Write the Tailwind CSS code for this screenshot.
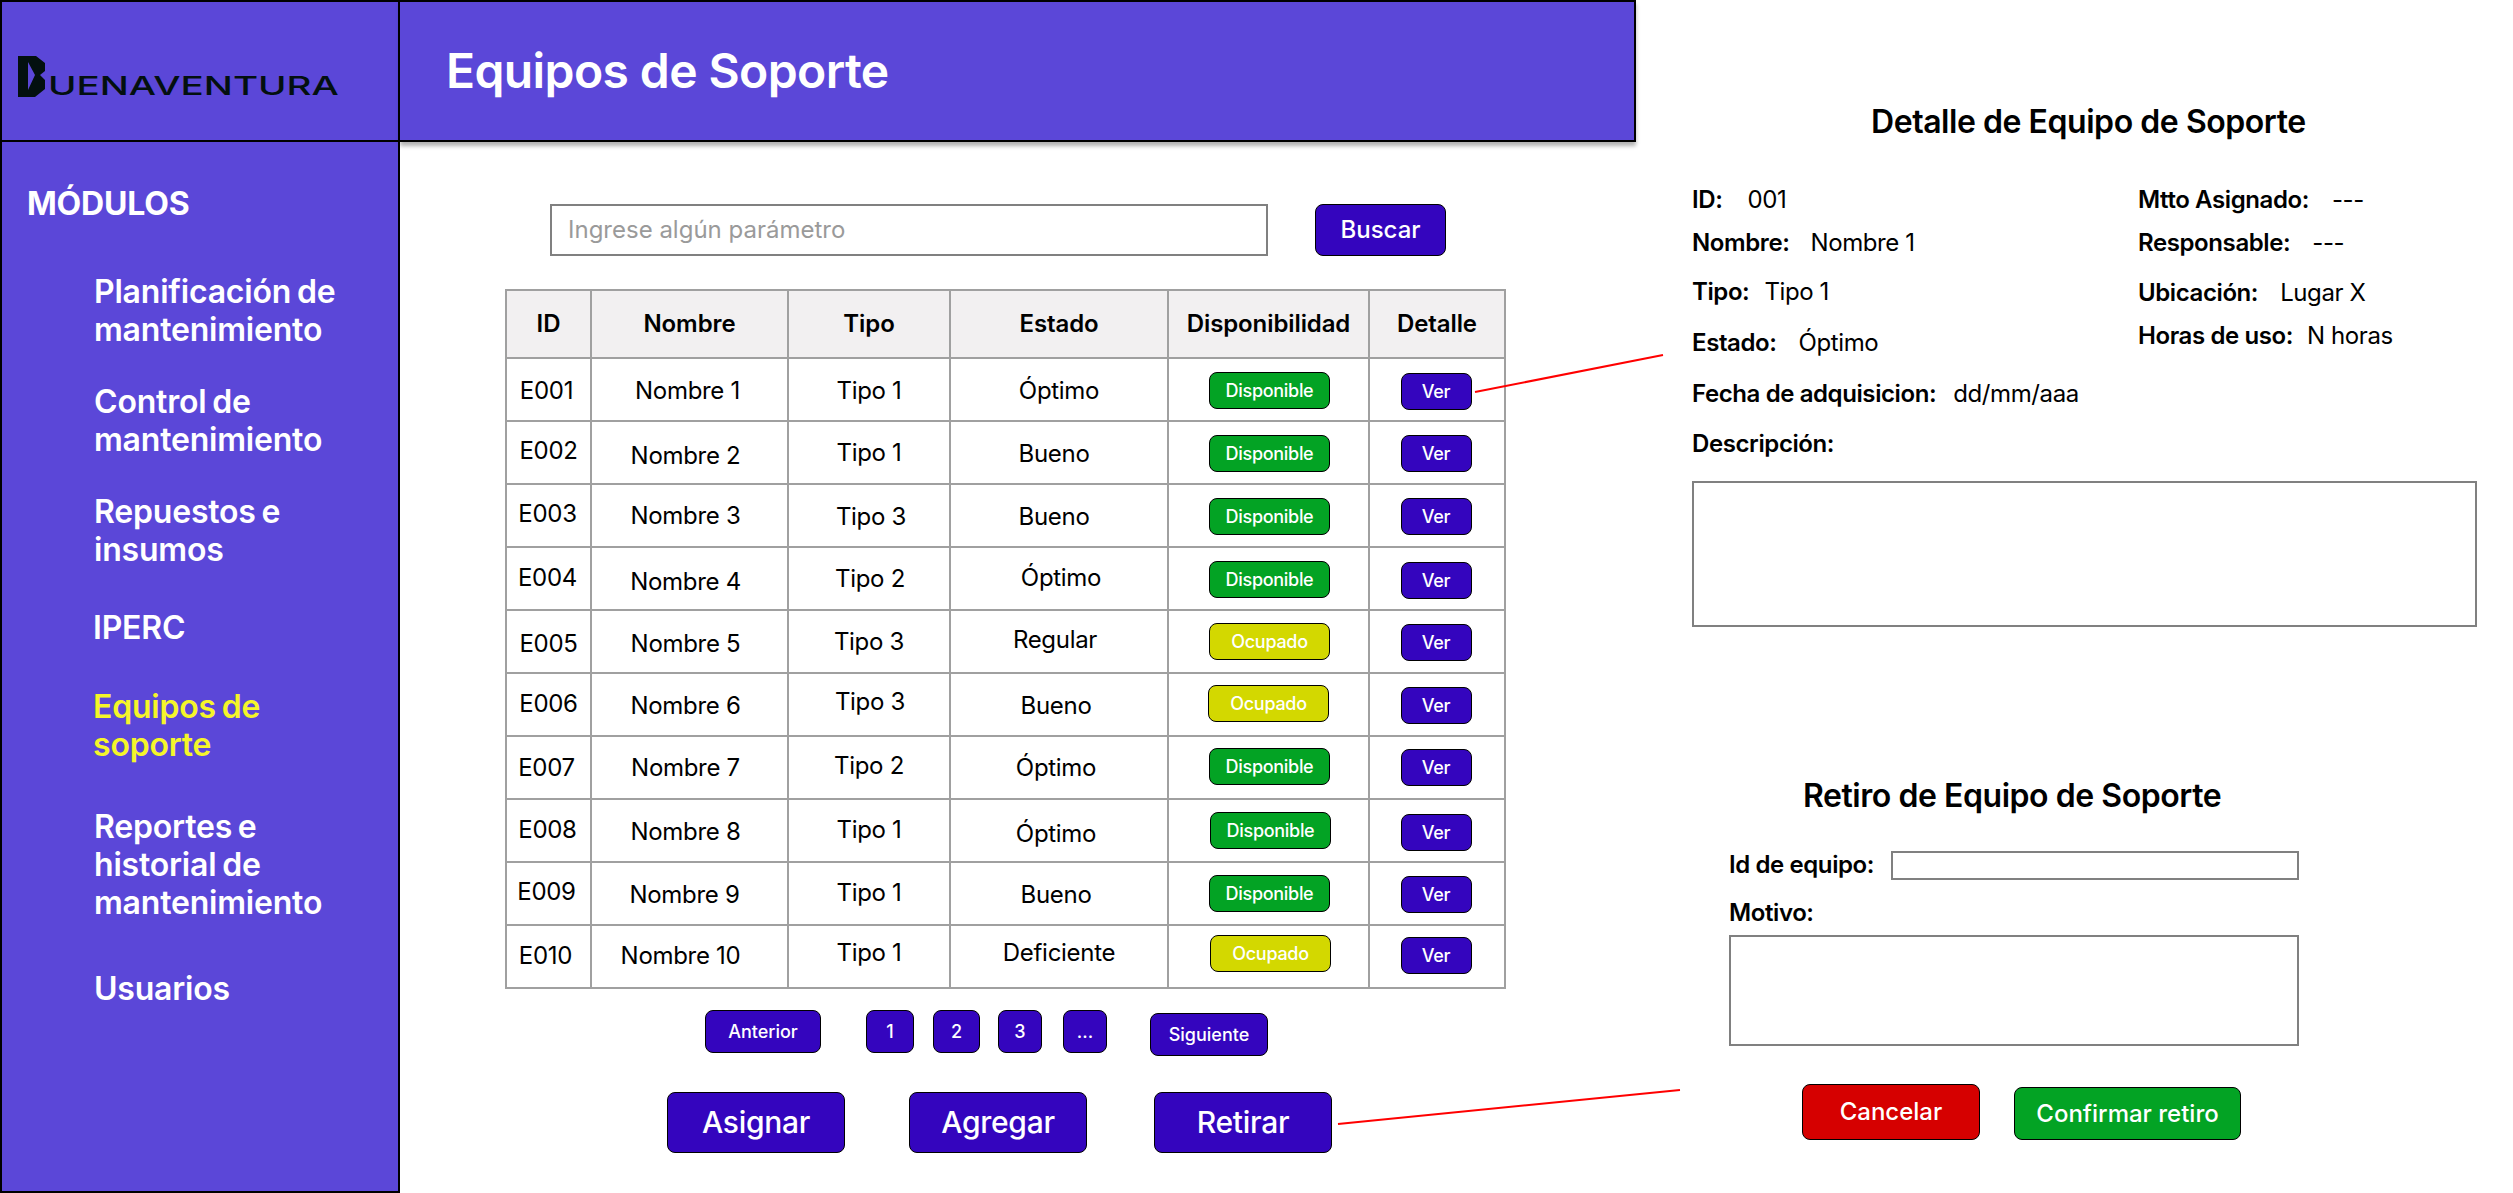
<!DOCTYPE html>
<html lang="es">
<head>
    <meta charset="UTF-8">
    <title>Equipos de Soporte</title>
    <script src="https://cdn.jsdelivr.net/npm/@tailwindcss/browser@4"></script>
</head>
<body class="relative w-[2513px] h-[1193px] overflow-hidden bg-white text-black font-['Inter',sans-serif]">
    <div class="grid grid-cols-[400px_1236px_1fr] h-full">
        <!-- sidebar -->
        <aside class="flex flex-col h-full bg-[#5b47d8] border-2 border-black">
            <div class="flex items-start h-[140px] border-b-2 border-black pl-[16px] pt-[54px] shrink-0">
                <svg class="w-[27px] h-[41px] shrink-0" viewBox="0 0 27 41"><path d="M0 0H18L27 7V15L22 19L27 24V33L17 41H0Z M10 6V34L17 19Z" fill="#03100f" fill-rule="evenodd"/></svg>
                <span class="block origin-left scale-x-[1.48] ml-[3px] mt-[17px] text-[26px] leading-[26px] font-medium text-[#03100f] whitespace-nowrap">UENAVENTURA</span>
            </div>
            <nav class="text-white text-[32px] leading-[38px] font-semibold tracking-[-0.2px] [word-spacing:-2px]">
                <h2 class="ml-[25px] mt-[43px] font-bold">MÓDULOS</h2>
                <a class="block ml-[92px] mt-[50px]">Planificación de<br>mantenimiento</a>
                <a class="block ml-[92px] mt-[34px]">Control de<br>mantenimiento</a>
                <a class="block ml-[92px] mt-[34px]">Repuestos e<br>insumos</a>
                <a class="block ml-[91px] mt-[40px]">IPERC</a>
                <a class="block ml-[91px] mt-[41px] text-[#f5f52a]">Equipos de<br>soporte</a>
                <a class="block ml-[92px] mt-[44px]">Reportes e<br>historial de<br>mantenimiento</a>
                <a class="block ml-[92px] mt-[48px]">Usuarios</a>
            </nav>
        </aside>

        <!-- main -->
        <main class="flex flex-col h-full">
            <header class="flex items-center h-[142px] shrink-0 bg-[#5b47d8] border-t-2 border-r-2 border-b-2 border-black pl-[46px] shadow-[0_4px_4px_rgba(0,0,0,0.3)]">
                <h1 class="text-white text-[48px] font-semibold leading-none tracking-[-0.6px]">Equipos de Soporte</h1>
            </header>
            <div class="flex items-start ml-[150px] mt-[62px]">
                <div class="flex items-center w-[718px] h-[52px] border-2 border-[#808080] pl-[16px] text-[24px] text-[#9a9a9a]">Ingrese algún parámetro</div>
                <button class="w-[131px] h-[52px] ml-[47px] rounded-lg border border-black bg-[#3405be] text-white text-[24px] font-medium">Buscar</button>
            </div>
            <table class="ml-[105px] mt-[33px] w-[1001px] table-fixed border-collapse text-[24px] tracking-[-0.3px]">
                <thead>
                    <tr class="h-[68px] bg-[#f2f0f1] font-semibold tracking-[-0.1px]">
                        <th class="w-[85px] border-2 border-[#a0a0a0] font-semibold">ID</th>
                        <th class="w-[197px] border-2 border-[#a0a0a0] font-semibold">Nombre</th>
                        <th class="w-[162px] border-2 border-[#a0a0a0] font-semibold">Tipo</th>
                        <th class="w-[218px] border-2 border-[#a0a0a0] font-semibold">Estado</th>
                        <th class="w-[201px] border-2 border-[#a0a0a0] font-semibold">Disponibilidad</th>
                        <th class="border-2 border-[#a0a0a0] font-semibold">Detalle</th>
                    </tr>
                </thead>
                <tbody id="filas"></tbody>
            </table>
            <div class="flex items-start ml-[305px] mt-[21px] text-white text-[18px] font-medium">
                <button class="w-[116px] h-[43px] rounded-lg border border-black bg-[#3405be]">Anterior</button>
                <button class="w-[48px] h-[43px] ml-[45px] rounded-lg border border-black bg-[#3405be]">1</button>
                <button class="w-[47px] h-[43px] ml-[19px] rounded-lg border border-black bg-[#3405be]">2</button>
                <button class="w-[44px] h-[43px] ml-[18px] rounded-lg border border-black bg-[#3405be]">3</button>
                <button class="w-[44px] h-[43px] ml-[21px] rounded-lg border border-black bg-[#3405be]">...</button>
                <button class="w-[118px] h-[43px] ml-[43px] mt-[3px] rounded-lg border border-black bg-[#3405be]">Siguiente</button>
            </div>
            <div class="flex ml-[267px] mt-[36px] text-white text-[30px] font-medium tracking-[-0.3px]">
                <button class="w-[178px] h-[61px] rounded-lg border border-black bg-[#3405be]">Asignar</button>
                <button class="w-[178px] h-[61px] ml-[64px] rounded-lg border border-black bg-[#3405be]">Agregar</button>
                <button class="w-[178px] h-[61px] ml-[67px] rounded-lg border border-black bg-[#3405be]">Retirar</button>
            </div>
        </main>

        <!-- panels -->
        <section class="flex flex-col pl-[56px] text-[24px] leading-[30px] tracking-[-0.4px]">
            <h2 class="mt-[103px] ml-[179px] text-[32px] leading-[38px] font-semibold tracking-[-0.45px] whitespace-nowrap">Detalle de Equipo de Soporte</h2>
            <div class="flex mt-[44px]">
                <div class="w-[446px]">
                    <p class="h-[30px]"><b class="font-semibold">ID:</b><span class="ml-[25px]">001</span></p>
                    <p class="mt-[13px]"><b class="font-semibold">Nombre:</b><span class="ml-[21px]">Nombre 1</span></p>
                    <p class="mt-[19px]"><b class="font-semibold">Tipo:</b><span class="ml-[15px]">Tipo 1</span></p>
                    <p class="mt-[21px]"><b class="font-semibold">Estado:</b><span class="ml-[22px]">Óptimo</span></p>
                    <p class="mt-[21px]"><b class="font-semibold">Fecha de adquisicion:</b><span class="ml-[17px]">dd/mm/aaa</span></p>
                    <p class="mt-[20px] font-semibold">Descripción:</p>
                </div>
                <div>
                    <p><b class="font-semibold">Mtto Asignado:</b><span class="ml-[23px]">---</span></p>
                    <p class="mt-[13px]"><b class="font-semibold">Responsable:</b><span class="ml-[22px]">---</span></p>
                    <p class="mt-[20px]"><b class="font-semibold">Ubicación:</b><span class="ml-[22px]">Lugar X</span></p>
                    <p class="mt-[13px]"><b class="font-semibold">Horas de uso:</b><span class="ml-[14px]">N horas</span></p>
                </div>
            </div>
            <div class="w-[785px] h-[146px] mt-[22px] border-2 border-[#808080]"></div>

            <h2 class="mt-[150px] ml-[111px] text-[32px] leading-[38px] font-semibold tracking-[-0.45px] whitespace-nowrap">Retiro de Equipo de Soporte</h2>
            <div class="flex items-center ml-[37px] mt-[35px]">
                <span class="w-[162px] font-semibold">Id de equipo:</span>
                <div class="w-[408px] h-[29px] border-2 border-[#808080]"></div>
            </div>
            <p class="ml-[37px] mt-[18px] font-semibold">Motivo:</p>
            <div class="ml-[37px] w-[570px] h-[111px] mt-[7px] border-2 border-[#808080]"></div>
            <div class="flex items-start ml-[110px] mt-[38px] text-white text-[24px] font-medium tracking-normal">
                <button class="w-[178px] h-[56px] rounded-lg border border-black bg-[#d60000]">Cancelar</button>
                <button class="w-[227px] h-[53px] ml-[34px] mt-[3px] rounded-lg border border-black bg-[#03a324]">Confirmar retiro</button>
            </div>
        </section>
    </div>

    <!-- red connector lines -->
    <svg class="absolute left-0 top-0 pointer-events-none" width="2513" height="1193">
        <line x1="1475" y1="392" x2="1663" y2="355" stroke="#ff0000" stroke-width="2"/>
        <line x1="1338" y1="1124" x2="1680" y2="1090" stroke="#ff0000" stroke-width="2"/>
    </svg>

    <script>
        // [id, nombre, tipo, estado, disponibilidad, offsets y de cada celda, offsets x de id/nombre/tipo/estado/pill]
        const filas = [
            ['E001', 'Nombre 1', 'Tipo 1', 'Óptimo', 'Disponible', [1, 1, 1, 1, 1, 2], [-2, -2, 0, 0, 1]],
            ['E002', 'Nombre 2', 'Tipo 1', 'Bueno', 'Disponible', [-2, 3, 0, 1, 1, 1], [0, -4, 0, -5, 1]],
            ['E003', 'Nombre 3', 'Tipo 3', 'Bueno', 'Disponible', [-2, 0, 1, 1, 1, 1], [-1, -4, 2, -5, 1]],
            ['E004', 'Nombre 4', 'Tipo 2', 'Óptimo', 'Disponible', [-1, 3, 0, -1, 1, 2], [-1, -4, 1, 2, 1]],
            ['E005', 'Nombre 5', 'Tipo 3', 'Regular', 'Ocupado', [2, 2, 0, -2, 0, 1], [0, -4, 0, -4, 1]],
            ['E006', 'Nombre 6', 'Tipo 3', 'Bueno', 'Ocupado', [-1, 1, -3, 1, -1, 1], [0, -4, 1, -3, 0]],
            ['E007', 'Nombre 7', 'Tipo 2', 'Óptimo', 'Disponible', [0, 0, -2, 0, -1, 0], [-2, -4, 0, -3, 1]],
            ['E008', 'Nombre 8', 'Tipo 1', 'Óptimo', 'Disponible', [-1, 1, -1, 3, 0, 2], [-1, -4, 0, -3, 2]],
            ['E009', 'Nombre 9', 'Tipo 1', 'Bueno', 'Disponible', [-2, 1, -1, 1, 0, 1], [-2, -5, 0, -3, 1]],
            ['E010', 'Nombre 10', 'Tipo 1', 'Deficiente', 'Ocupado', [-1, -1, -4, -4, -3, -1], [-3, -9, 0, 0, 2]],
        ];

        const desplaza = (x, y) => `style="transform:translate(${x}px,${y}px)"`;

        document.getElementById('filas').innerHTML = filas.map(([id, nombre, tipo, estado, disp, dy, dx]) => {
            const color = disp === 'Disponible' ? 'bg-[#03a324]' : 'bg-[#d3d800]';
            return `<tr class="h-[63px]">
                <td class="border-2 border-[#a0a0a0] text-center"><div ${desplaza(dx[0], dy[0])}>${id}</div></td>
                <td class="border-2 border-[#a0a0a0] text-center"><div ${desplaza(dx[1], dy[1])}>${nombre}</div></td>
                <td class="border-2 border-[#a0a0a0] text-center"><div ${desplaza(dx[2], dy[2])}>${tipo}</div></td>
                <td class="border-2 border-[#a0a0a0] text-center"><div ${desplaza(dx[3], dy[3])}>${estado}</div></td>
                <td class="border-2 border-[#a0a0a0]"><div class="flex items-center justify-center w-[121px] h-[37px] mx-auto rounded-lg border border-black text-white text-[18px] font-medium ${color}" ${desplaza(dx[4], dy[4])}>${disp}</div></td>
                <td class="border-2 border-[#a0a0a0]"><div class="flex items-center justify-center w-[71px] h-[37px] mx-auto rounded-lg border border-black bg-[#3405be] text-white text-[18px] font-medium" ${desplaza(-1, dy[5])}>Ver</div></td>
            </tr>`;
        }).join('');
    </script>
</body>
</html>
